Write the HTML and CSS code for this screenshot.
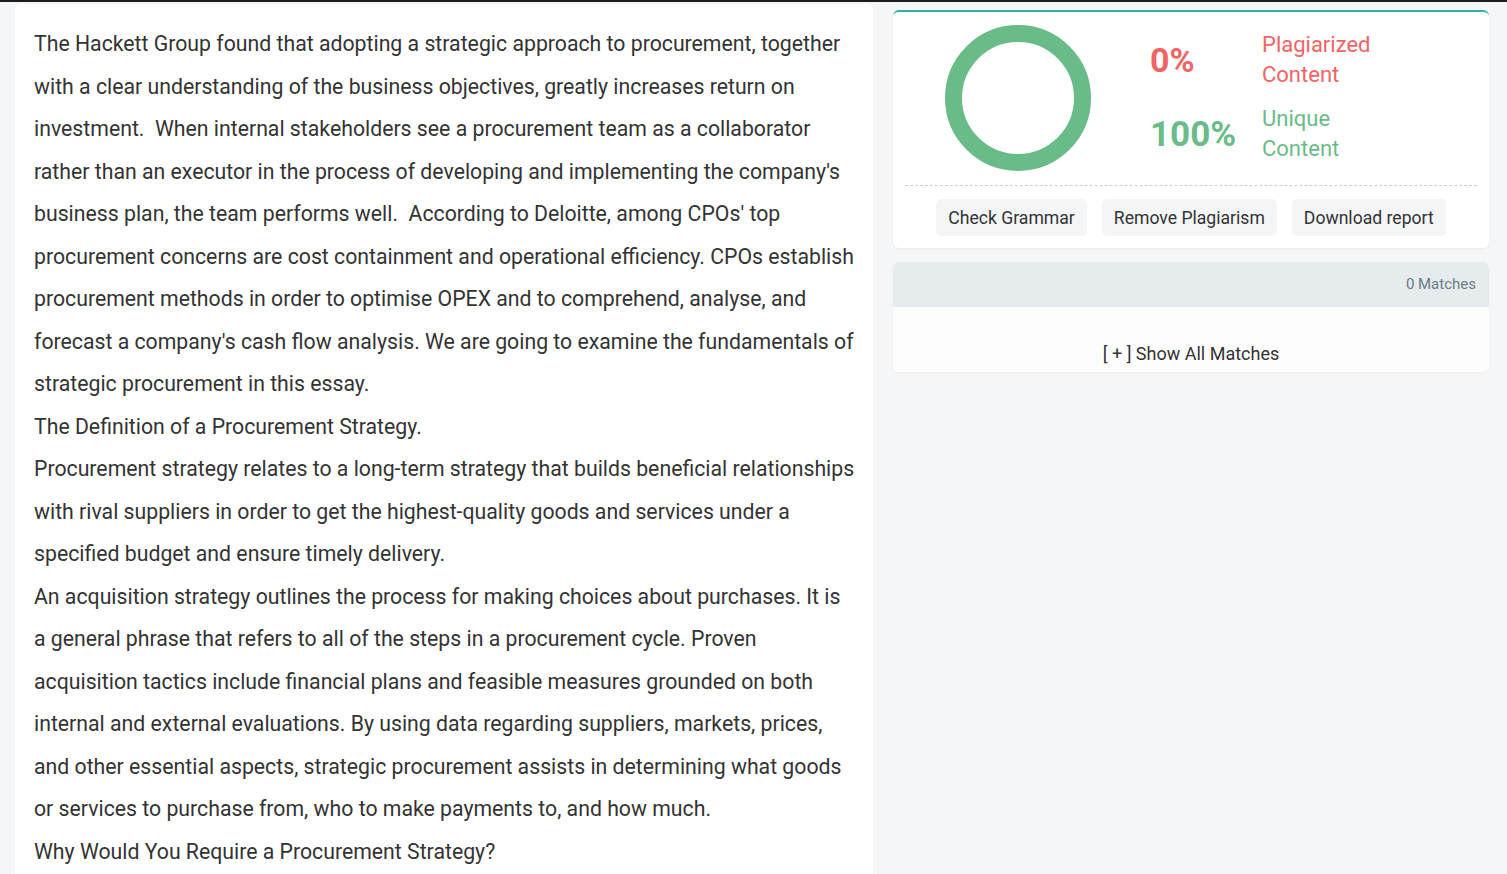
FILE: index.html
```
<!DOCTYPE html>
<html>
<head>
<meta charset="utf-8">
<link rel="stylesheet" href="styles.css">
</head>
<body>
<div class="topline"></div>
<div class="page">
  <div class="doc">
    <p>The Hackett Group found that adopting a strategic approach to procurement, together with a clear understanding of the business objectives, greatly increases return on investment.&nbsp; When internal stakeholders see a procurement team as a collaborator rather than an executor in the process of developing and implementing the company's business plan, the team performs well.&nbsp; According to Deloitte, among CPOs' top procurement concerns are cost containment and operational efficiency. CPOs establish procurement methods in order to optimise OPEX and to comprehend, analyse, and forecast a company's cash flow analysis. We are going to examine the fundamentals of strategic procurement in this essay.</p>
    <p>The Definition of a Procurement Strategy.</p>
    <p>Procurement strategy relates to a long-term strategy that builds beneficial relationships with rival suppliers in order to get the highest-quality goods and services under a specified budget and ensure timely delivery.</p>
    <p>An acquisition strategy outlines the process for making choices about purchases. It is a general phrase that refers to all of the steps in a procurement cycle. Proven acquisition tactics include financial plans and feasible measures grounded on both internal and external evaluations. By using data regarding suppliers, markets, prices, and other essential aspects, strategic procurement assists in determining what goods or services to purchase from, who to make payments to, and how much.</p>
    <p>Why Would You Require a Procurement Strategy?</p>
  </div>
  <div class="side">
    <div class="result">
      <div class="summary">
        <svg class="donut" width="146" height="146" viewBox="0 0 146 146">
          <circle cx="73" cy="73" r="64.5" fill="none" stroke="#69bb88" stroke-width="17"/>
        </svg>
        <div class="stats">
          <div class="stat">
            <span class="pct red">0%</span>
            <span class="lbl red">Plagiarized<br>Content</span>
          </div>
          <div class="stat">
            <span class="pct green">100%</span>
            <span class="lbl green">Unique<br>Content</span>
          </div>
        </div>
      </div>
      <div class="actions">
        <button class="btn">Check Grammar</button>
        <button class="btn">Remove Plagiarism</button>
        <button class="btn">Download report</button>
      </div>
    </div>
    <div class="matches">
      <div class="mhead">0 Matches</div>
      <div class="mbody">[ + ] Show All Matches</div>
    </div>
  </div>
</div>
</body>
</html>
```
FILE: styles.css
```
html, body {
  margin: 0;
  padding: 0;
  background: #f4f6f7;
  font-family: Roboto, "Liberation Sans", sans-serif;
  overflow: hidden;
  height: 874px;
}
.topline {
  height: 2px;
  background: #1e1e1e;
}
.page {
  display: flex;
  align-items: flex-start;
  padding: 2px 18px 0 15px;
  gap: 20px;
}
.doc {
  width: 858px;
  box-sizing: border-box;
  flex: none;
  background: #fff;
  border-radius: 6px 6px 0 0;
  padding: 19px 18px 0 19px;
  height: 900px;
  color: #333;
  font-size: 21.25px;
  line-height: 42.5px;
}
.doc p {
  margin: 0;
}
.side {
  flex: 1;
  display: flex;
  flex-direction: column;
  gap: 14px;
  padding-top: 6px;
}
.result {
  background: #fff;
  border-top: 2px solid #2eb1a9;
  border-radius: 6px;
  padding: 13px 12px 12px;
  box-shadow: 0 1px 3px rgba(0,0,0,0.05);
}
.summary {
  display: flex;
  align-items: center;
  padding: 0 0 14px 40px;
  border-bottom: 1px dashed #cfcfcf;
}
.donut {
  flex: none;
  display: block;
}
.stats {
  margin-left: 59px;
  display: flex;
  flex-direction: column;
  gap: 14px;
  margin-top: -2px;
}
.stat {
  display: flex;
  align-items: center;
}
.pct {
  width: 112px;
  font-weight: 700;
  font-size: 35px;
}
.pct.red { font-size: 34px; }
.lbl {
  font-size: 22px;
  line-height: 30px;
}
.red { color: #f26464; }
.green { color: #69bb88; }
.actions {
  display: flex;
  justify-content: center;
  gap: 15px;
  padding-top: 13px;
}
.btn {
  font-family: Roboto, "Liberation Sans", sans-serif;
  font-size: 17.6px;
  color: #333;
  background: #f3f5f7;
  border: none;
  border-radius: 5px;
  height: 37px;
  padding: 0 12px;
}
.matches {
  background: #fdfdfd;
  border-radius: 6px;
  overflow: hidden;
  box-shadow: 0 1px 3px rgba(0,0,0,0.04);
}
.mhead {
  background: #e6ebed;
  height: 45px;
  line-height: 45px;
  text-align: right;
  padding-right: 13px;
  color: #6c7c84;
  font-size: 15px;
}
.mbody {
  height: 65px;
  box-sizing: border-box;
  padding-top: 36px;
  text-align: center;
  font-size: 18px;
  color: #333;
  line-height: 22px;
}
```
